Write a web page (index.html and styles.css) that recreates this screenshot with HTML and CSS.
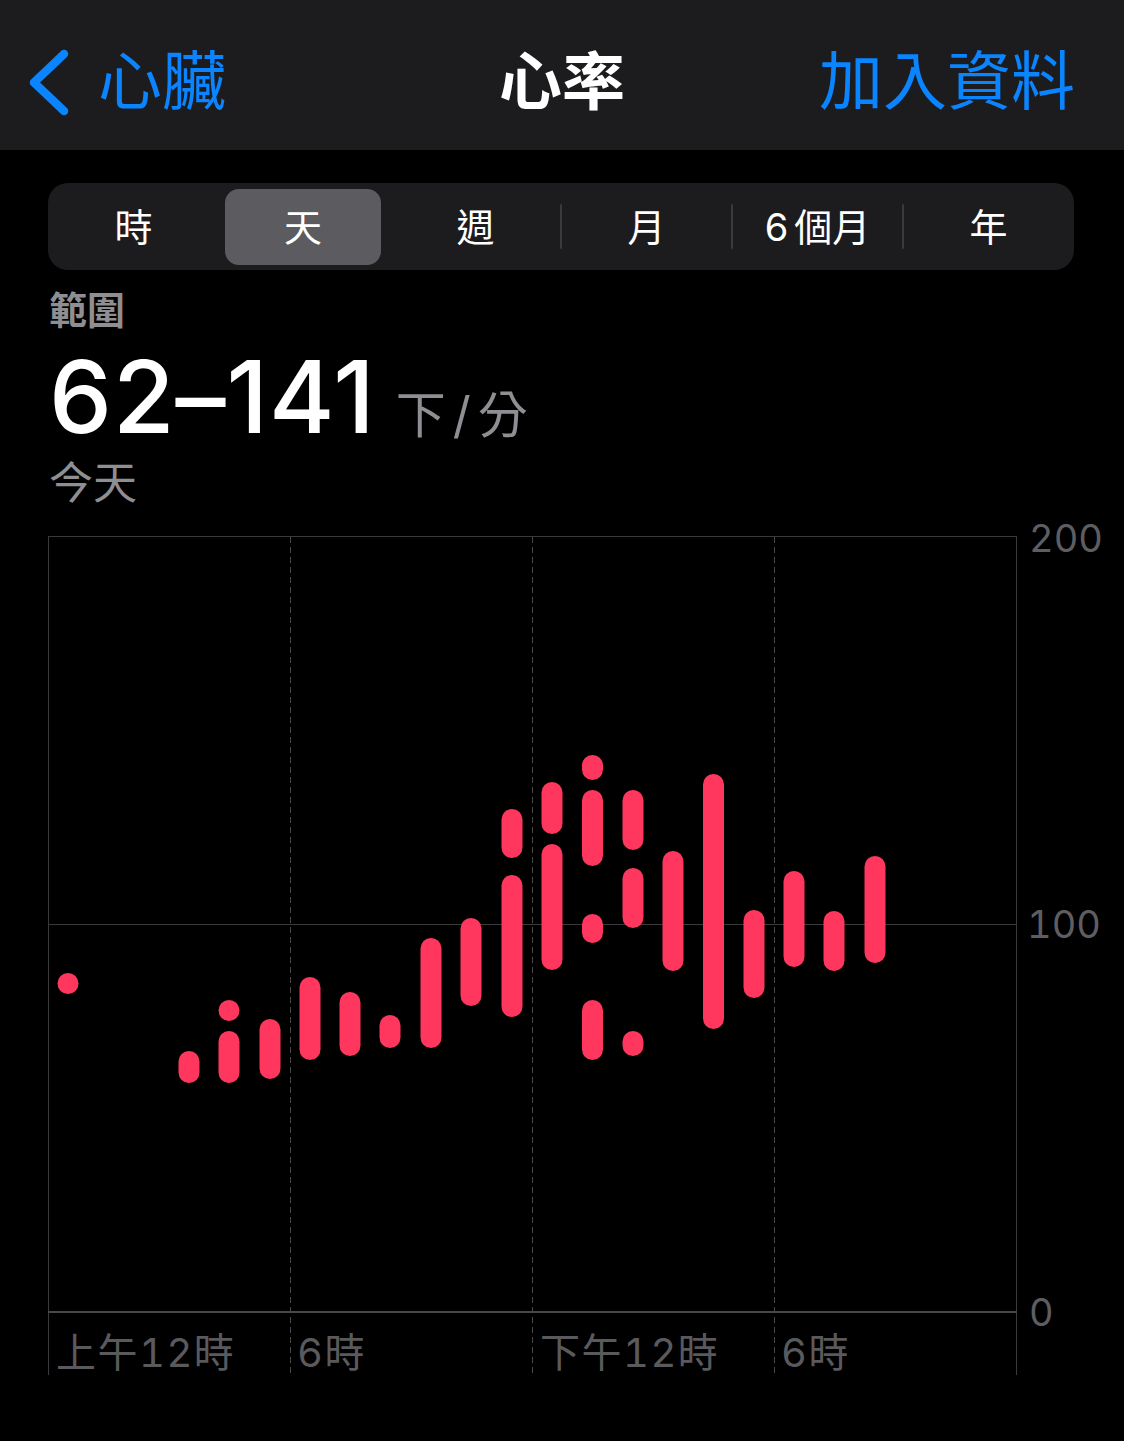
FILE: index.html
```html
<!DOCTYPE html>
<html lang="zh-Hant">
<head>
<meta charset="utf-8">
<title>心率</title>
<link rel="stylesheet" href="styles.css">
</head>
<body>
<header class="nav">
  <a class="back">
    <svg class="chev" viewBox="24 41 50 80" width="50" height="80" aria-hidden="true">
      <path d="M64 54 L34 82.5 L64 111"/>
    </svg>
    <span class="back-label">心臟</span>
  </a>
  <h1 class="title">心率</h1>
  <a class="add">加入資料</a>
</header>

<main class="content">
  <div class="seg">
    <div class="seg-item">時</div>
    <div class="seg-item is-selected">天</div>
    <div class="seg-item">週</div>
    <div class="seg-item has-divider">月</div>
    <div class="seg-item has-divider"><span class="seg-num">6</span>個月</div>
    <div class="seg-item has-divider">年</div>
  </div>

  <section class="summary">
    <div class="sum-label">範圍</div>
    <div class="sum-value"><span class="num">62–141</span><span class="unit">下/分</span></div>
    <div class="sum-date">今天</div>
  </section>

  <svg class="chart" viewBox="48 516 1076 870" width="1076" height="870">
    <g class="grid">
      <line x1="48" y1="536.5" x2="1017" y2="536.5"/>
      <line x1="48" y1="924.5" x2="1017" y2="924.5"/>
      <line x1="48.5" y1="536" x2="48.5" y2="1375"/>
      <line x1="1016.5" y1="536" x2="1016.5" y2="1375"/>
      <line class="dash" x1="290.5" y1="537" x2="290.5" y2="1375"/>
      <line class="dash" x1="532.5" y1="537" x2="532.5" y2="1375"/>
      <line class="dash" x1="774.5" y1="537" x2="774.5" y2="1375"/>
      <line class="base" x1="48" y1="1312" x2="1017" y2="1312"/>
    </g>
    <g class="ylabels">
      <text x="1029" y="552">200</text>
      <text x="1027" y="938">100</text>
      <text x="1029" y="1326">0</text>
    </g>
    <g class="xlabels">
      <text x="56" y="1367">上午12時</text>
      <text x="297" y="1367">6時</text>
      <text x="540" y="1367">下午12時</text>
      <text x="781" y="1367">6時</text>
    </g>
    <g class="bars">
      <rect x="57.5" y="973" width="21" height="21" rx="10.5"/>
      <rect x="178.5" y="1051" width="21" height="32" rx="10.5"/>
      <rect x="218.5" y="1000" width="21" height="21" rx="10.5"/>
      <rect x="218.5" y="1031" width="21" height="52" rx="10.5"/>
      <rect x="259.5" y="1019" width="21" height="60" rx="10.5"/>
      <rect x="299.5" y="977" width="21" height="83" rx="10.5"/>
      <rect x="339.5" y="992" width="21" height="64" rx="10.5"/>
      <rect x="379.5" y="1015" width="21" height="33" rx="10.5"/>
      <rect x="420.5" y="938" width="21" height="110" rx="10.5"/>
      <rect x="460.5" y="918" width="21" height="88" rx="10.5"/>
      <rect x="501.5" y="809" width="21" height="49" rx="10.5"/>
      <rect x="501.5" y="875" width="21" height="142" rx="10.5"/>
      <rect x="541.5" y="782" width="21" height="52" rx="10.5"/>
      <rect x="541.5" y="844" width="21" height="126" rx="10.5"/>
      <rect x="582" y="755" width="21" height="25" rx="10.5"/>
      <rect x="582" y="790" width="21" height="76" rx="10.5"/>
      <rect x="582" y="914" width="21" height="29" rx="10.5"/>
      <rect x="582" y="1000" width="21" height="60" rx="10.5"/>
      <rect x="622.5" y="790" width="21" height="60" rx="10.5"/>
      <rect x="622.5" y="868" width="21" height="60" rx="10.5"/>
      <rect x="622.5" y="1031" width="21" height="25" rx="10.5"/>
      <rect x="662.5" y="851" width="21" height="120" rx="10.5"/>
      <rect x="703" y="774" width="21" height="255" rx="10.5"/>
      <rect x="743.5" y="910" width="21" height="88" rx="10.5"/>
      <rect x="783.5" y="871" width="21" height="96" rx="10.5"/>
      <rect x="823.5" y="911" width="21" height="60" rx="10.5"/>
      <rect x="864.5" y="856" width="21" height="107" rx="10.5"/>
    </g>
  </svg>
</main>
</body>
</html>
```

FILE: styles.css
```css
* {
  box-sizing: border-box;
}

html, body {
  margin: 0;
  padding: 0;
  background: #000;
}

body {
  font-family: Inter, "Noto Sans CJK TC", sans-serif;
  color: #fff;
  width: 1124px;
  min-height: 1441px;
  overflow: hidden;
}

/* Navigation bar */
.nav {
  height: 150px;
  padding-top: 12px;
  background: #1c1c1e;
  display: grid;
  grid-template-columns: 1fr auto 1fr;
  align-items: center;
}

.back {
  display: flex;
  align-items: center;
  padding-left: 24px;
  color: #0a84ff;
  font-size: 64px;
  line-height: 1;
}

.chev {
  display: block;
  fill: none;
  stroke: #0a84ff;
  stroke-width: 8.5;
  stroke-linecap: round;
  stroke-linejoin: round;
}

.back-label {
  margin-left: 24px;
}

.title {
  margin: 0;
  font-size: 63px;
  line-height: 1;
  font-weight: 700;
  color: #fff;
}

.add {
  justify-self: end;
  padding-right: 49px;
  color: #0a84ff;
  font-size: 64px;
  line-height: 1;
}

/* Content */
.content {
  padding: 0 0 0 48px;
}

.seg {
  margin-top: 33px;
  width: 1026px;
  height: 87px;
  border-radius: 20px;
  background: #1c1c1e;
  display: grid;
  grid-template-columns: repeat(6, 171px);
}

.seg-item {
  position: relative;
  display: flex;
  align-items: center;
  justify-content: center;
  font-size: 38px;
  line-height: 1;
  color: #fff;
}

.seg-num {
  margin-right: 6px;
}

.seg-item.is-selected {
  margin: 6px 9px 5px 6px;
  border-radius: 14px;
  background: #5c5c60;
}

.seg-item.has-divider::before {
  content: "";
  position: absolute;
  left: -1px;
  top: 21px;
  width: 2px;
  height: 45px;
  border-radius: 1px;
  background: #3a3a3c;
}

/* Summary */
.summary {
  padding-left: 1px;
}

.sum-label {
  margin-top: 21px;
  font-size: 38px;
  line-height: 38px;
  font-weight: 700;
  color: #8e8e93;
}

.sum-value {
  margin-top: 18px;
  height: 100px;
  font-size: 100px;
  line-height: 100px;
  font-weight: 500;
  color: #fff;
  white-space: nowrap;
}

.num {
  letter-spacing: 1px;
}

.unit {
  margin-left: 20px;
  font-size: 50px;
  line-height: 50px;
  font-weight: 400;
  letter-spacing: 7px;
  color: #8e8e93;
}

.sum-date {
  margin-top: 14px;
  font-size: 44px;
  line-height: 44px;
  color: #8e8e93;
}

/* Chart */
.chart {
  display: block;
  margin-top: 11px;
  overflow: visible;
}

.grid line {
  stroke: #3a3a3c;
  stroke-width: 1;
}

.grid line.dash {
  stroke: #48484a;
  stroke-dasharray: 6 4;
}

.grid line.base {
  stroke: #48484a;
  stroke-width: 2;
}

.ylabels text {
  font-family: Inter, sans-serif;
  font-size: 38px;
  font-variant-numeric: tabular-nums;
  fill: #5e5e62;
}

.xlabels text {
  font-family: Inter, "Noto Sans CJK TC", sans-serif;
  font-size: 40px;
  letter-spacing: 1.5px;
  font-variant-numeric: tabular-nums;
  fill: #5a5a5e;
}

.bars rect {
  fill: #ff375f;
}
```
